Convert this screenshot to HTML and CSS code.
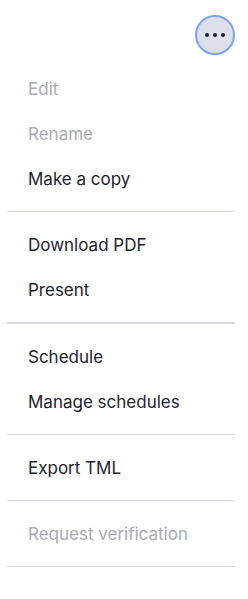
FILE: index.html
```html
<!DOCTYPE html>
<html lang="en">
<head>
<meta charset="utf-8">
<link rel="stylesheet" href="styles.css">
</head>
<body>
<div class="header">
  <button class="more-btn" aria-label="More">
    <svg width="20" height="6" viewBox="0 0 20 6"><circle cx="2" cy="3" r="2"/><circle cx="10" cy="3" r="2"/><circle cx="18" cy="3" r="2"/></svg>
  </button>
</div>
<div class="menu">
  <div class="group first">
    <div class="item disabled">Edit</div>
    <div class="item disabled">Rename</div>
    <div class="item">Make a copy</div>
  </div>
  <div class="sep"></div>
  <div class="group">
    <div class="item">Download PDF</div>
    <div class="item">Present</div>
  </div>
  <div class="sep thick"></div>
  <div class="group">
    <div class="item">Schedule</div>
    <div class="item">Manage schedules</div>
  </div>
  <div class="sep"></div>
  <div class="group">
    <div class="item">Export TML</div>
  </div>
  <div class="sep"></div>
  <div class="group">
    <div class="item disabled">Request verification</div>
  </div>
  <div class="sep"></div>
</div>
</body>
</html>
```
FILE: styles.css
```css
html, body {
  margin: 0;
  padding: 0;
  background: #ffffff;
}
body {
  font-family: Inter, "Noto Sans", sans-serif;
  font-size: 17px;
  color: #1d2230;
  width: 248px;
}
.header {
  display: flex;
  justify-content: flex-end;
  padding: 15px 13px 0 0;
  height: 40px;
}
.more-btn {
  width: 40px;
  height: 40px;
  box-sizing: border-box;
  border-radius: 50%;
  border: 2px solid #7ba4ee;
  background: #dde0ea;
  display: flex;
  align-items: center;
  justify-content: center;
  padding: 0;
  margin: 0;
}
.more-btn svg {
  fill: #1d2230;
  display: block;
}
.menu {
  margin-top: 11px;
  padding: 0 13px 0 7px;
}
.group {
  padding: 10px 0;
}
.group.first {
  padding-top: 0;
}
.item {
  height: 45px;
  display: flex;
  align-items: center;
  padding-left: 21px;
  line-height: 20px;
  white-space: nowrap;
}
.item.disabled {
  color: #a9abb3;
}
.sep {
  height: 1px;
  background: #dcdbe6;
}
.sep.thick {
  height: 2px;
  background: #d9dae1;
}
```
